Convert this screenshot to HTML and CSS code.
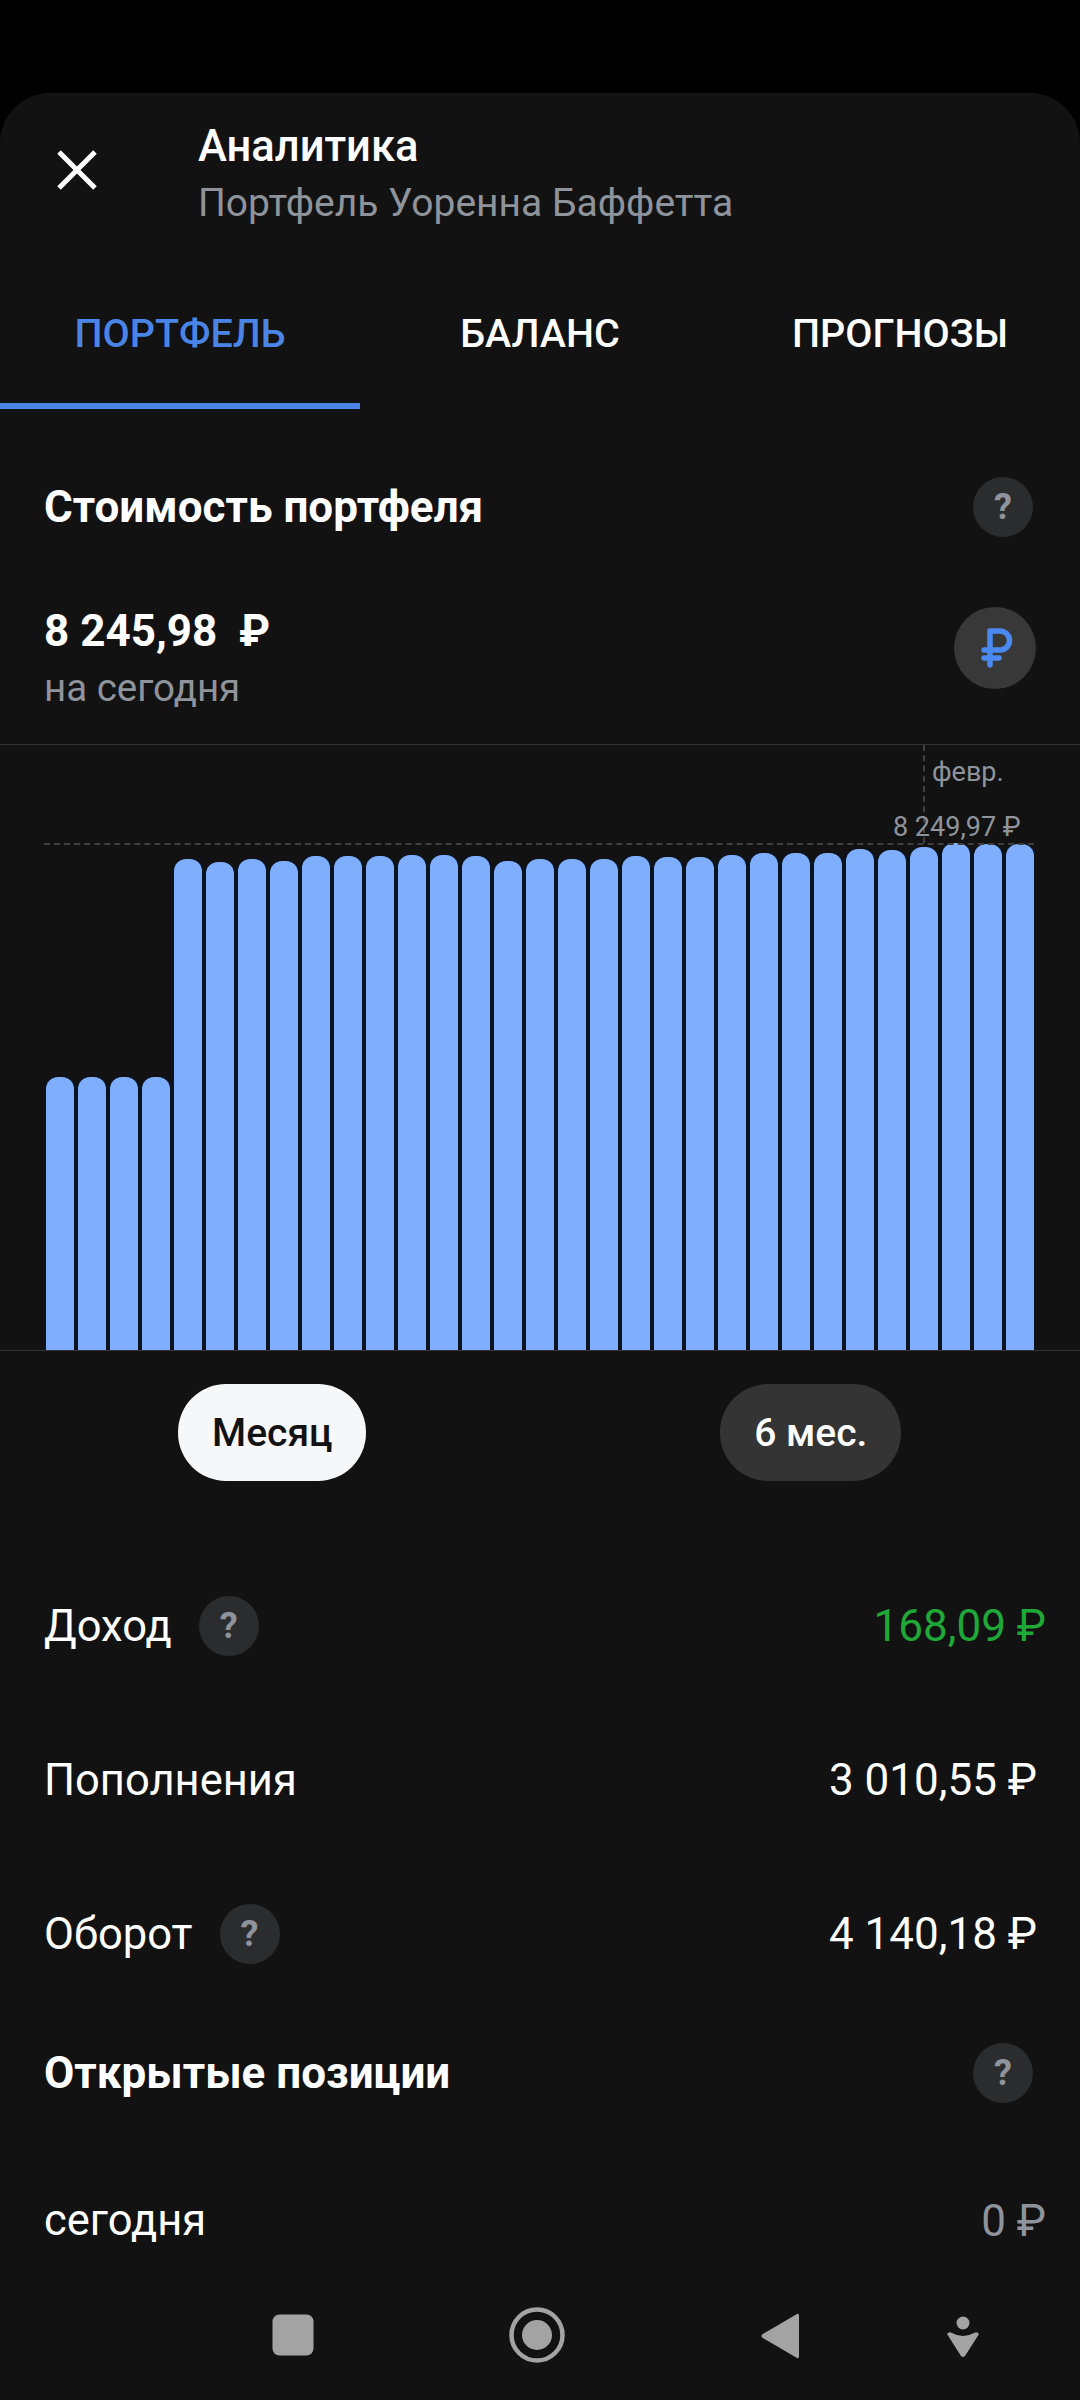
FILE: index.html
```html
<!DOCTYPE html>
<html lang="ru">
<head>
    <meta charset="UTF-8">
    <meta name="viewport" content="width=device-width, initial-scale=1.0">
    <title>Аналитика</title>
    <link rel="stylesheet" href="styles.css">
</head>
<body>

<div class="sheet">
    <header class="top">
        <svg class="close-icon" width="40" height="40" viewBox="0 0 40 40">
            <path d="M2 2 L38 38 M38 2 L2 38" stroke="#fff" stroke-width="5" fill="none"/>
        </svg>
        <div class="top-text">
            <div class="top-title">Аналитика</div>
            <div class="top-sub">Портфель Уоренна Баффетта</div>
        </div>
    </header>

    <nav class="tabs">
        <div class="tab active">ПОРТФЕЛЬ</div>
        <div class="tab">БАЛАНС</div>
        <div class="tab">ПРОГНОЗЫ</div>
    </nav>

    <div class="section-head first">
        <h2>Стоимость портфеля</h2>
        <span class="help">?</span>
    </div>

    <div class="total">
        <div class="total-text">
            <div class="total-sum">8 245,98&nbsp; ₽</div>
            <div class="total-date">на сегодня</div>
        </div>
        <div class="currency">
            <svg width="32" height="40" viewBox="0 0 32 40">
                <path d="M9 37 V3 H19 A9.500 9.500 0 0 1 19 22 H3 M3 30 H18" stroke="#4a8af0" stroke-width="5.500" fill="none" stroke-linecap="round" stroke-linejoin="round"/>
            </svg>
        </div>
    </div>

    <div class="chart">
        <div class="guide-v"></div>
        <div class="guide-h"></div>
        <span class="chart-month">февр.</span>
        <span class="chart-max">8 249,97 ₽</span>
        <div class="bars">
            <div class="bar" style="height: 273px"></div>
            <div class="bar" style="height: 273px"></div>
            <div class="bar" style="height: 273px"></div>
            <div class="bar" style="height: 273px"></div>
            <div class="bar" style="height: 491px"></div>
            <div class="bar" style="height: 488px"></div>
            <div class="bar" style="height: 491px"></div>
            <div class="bar" style="height: 489px"></div>
            <div class="bar" style="height: 494px"></div>
            <div class="bar" style="height: 494px"></div>
            <div class="bar" style="height: 494px"></div>
            <div class="bar" style="height: 495px"></div>
            <div class="bar" style="height: 495px"></div>
            <div class="bar" style="height: 494px"></div>
            <div class="bar" style="height: 489px"></div>
            <div class="bar" style="height: 491px"></div>
            <div class="bar" style="height: 491px"></div>
            <div class="bar" style="height: 491px"></div>
            <div class="bar" style="height: 494px"></div>
            <div class="bar" style="height: 493px"></div>
            <div class="bar" style="height: 493px"></div>
            <div class="bar" style="height: 495px"></div>
            <div class="bar" style="height: 497px"></div>
            <div class="bar" style="height: 497px"></div>
            <div class="bar" style="height: 497px"></div>
            <div class="bar" style="height: 501px"></div>
            <div class="bar" style="height: 500px"></div>
            <div class="bar" style="height: 503px"></div>
            <div class="bar" style="height: 507px"></div>
            <div class="bar" style="height: 506px"></div>
            <div class="bar" style="height: 506px"></div>
        </div>
    </div>

    <div class="periods">
        <button class="pill selected">Месяц</button>
        <button class="pill">6 мес.</button>
    </div>

    <div class="row">
        <div class="row-label">Доход <span class="help">?</span></div>
        <div class="row-value green">168,09 ₽</div>
    </div>
    <div class="row">
        <div class="row-label">Пополнения</div>
        <div class="row-value inset">3 010,55 ₽</div>
    </div>
    <div class="row">
        <div class="row-label">Оборот <span class="help">?</span></div>
        <div class="row-value inset">4 140,18 ₽</div>
    </div>

    <div class="section-head">
        <h2>Открытые позиции</h2>
        <span class="help">?</span>
    </div>

    <div class="row today">
        <div class="row-label">сегодня</div>
        <div class="row-value gray">0 ₽</div>
    </div>

    <div class="navbar">
        <svg class="nav-square" width="42" height="42" viewBox="0 0 42 42">
            <rect x="0.500" y="0.500" width="41" height="41" rx="7" fill="#a3a3a3"/>
        </svg>
        <svg class="nav-home" width="56" height="56" viewBox="0 0 56 56">
            <circle cx="28" cy="28" r="25.500" stroke="#a3a3a3" stroke-width="4.500" fill="none"/>
            <circle cx="28" cy="28" r="15" fill="#a3a3a3"/>
        </svg>
        <svg class="nav-back" width="40" height="48" viewBox="0 0 40 48">
            <path d="M37 2 Q39 1 39 4 V44 Q39 47 37 46 L2 25.500 Q1 24 2 22.500 Z" fill="#a3a3a3"/>
        </svg>
        <svg class="nav-person" width="34" height="42" viewBox="0 0 34 42">
            <circle cx="17" cy="7" r="6.500" fill="#a3a3a3"/>
            <path d="M1 18 Q3 15 6 17 Q17 23 28 17 Q31 15 33 18 L19 40 Q17 42 15 40 Z" fill="#a3a3a3"/>
        </svg>
    </div>
</div>

</body>
</html>
```

FILE: styles.css
```css
* {
    box-sizing: border-box;
}
body {
    margin: 0;
    padding-top: 93px;
    background-color: #000;
    font-family: Roboto, "Noto Sans", sans-serif;
    color: #fff;
}
.sheet {
    height: 2307px;
    background-color: #121212;
    border-radius: 50px 50px 0 0;
    overflow: hidden;
}

/* header */
.top {
    display: flex;
    align-items: flex-start;
    height: 160px;
    padding: 57px 0 0 57px;
}
.close-icon {
    flex: none;
    margin-right: 101px;
}
.top-text {
    margin-top: -30px;
}
.top-title {
    font-size: 43.500px;
    font-weight: 500;
    line-height: 54px;
}
.top-sub {
    font-size: 39px;
    line-height: 52px;
    margin-top: 3px;
    color: #8f939b;
}

/* tabs */
.tabs {
    display: grid;
    grid-template-columns: repeat(3, 1fr);
    height: 156px;
}
.tab {
    display: flex;
    align-items: center;
    justify-content: center;
    height: 156px;
    padding-top: 4px;
    font-size: 39.500px;
    font-weight: 500;
}
.tab.active {
    color: #4a85e6;
    box-shadow: inset 0 -6px 0 #4a85e6;
}

/* section titles */
.section-head {
    display: flex;
    align-items: center;
    justify-content: space-between;
    height: 124px;
    padding: 0 47px 0 44px;
}
.section-head.first {
    height: 100px;
    margin-top: 48px;
}
.section-head h2 {
    margin: 0;
    font-size: 44px;
    font-weight: 700;
}
.help {
    display: inline-flex;
    align-items: center;
    justify-content: center;
    width: 60px;
    height: 60px;
    border-radius: 50%;
    background-color: #2b2c2e;
    color: #8f939b;
    font-size: 36px;
    font-weight: 700;
}

/* total */
.total {
    display: flex;
    align-items: center;
    justify-content: space-between;
    height: 187px;
    padding: 0 44px 0 44px;
}
.total-text {
    margin-top: 14px;
}
.total-sum {
    font-size: 44px;
    font-weight: 700;
    line-height: 56px;
    margin-top: 1px;
}
.total-date {
    font-size: 38.500px;
    line-height: 52px;
    margin-top: 3px;
    color: #8f939b;
}
.currency {
    display: flex;
    align-items: center;
    justify-content: center;
    width: 82px;
    height: 82px;
    margin-top: -5px;
    padding-left: 4px;
    border-radius: 50%;
    background-color: #383838;
}

/* chart */
.chart {
    position: relative;
    height: 607px;
    border-top: 1px solid #343434;
    border-bottom: 1px solid #343434;
}
.bars {
    display: flex;
    align-items: flex-end;
    gap: 4.500px;
    height: 605px;
    padding-left: 46px;
}
.bar {
    flex: none;
    width: 27.500px;
    background-color: #7eaefc;
    border-radius: 12px 12px 0 0;
    box-shadow: 2px 0 0 #0a1420, -2px 0 0 #0a1420;
}
.guide-v {
    position: absolute;
    left: 923px;
    top: 0;
    height: 98px;
    border-left: 2px dashed #3f3f3f;
}
.guide-h {
    position: absolute;
    left: 44px;
    right: 46px;
    top: 98px;
    border-top: 2px dashed #3f3f3f;
}
.chart-month,
.chart-max {
    position: absolute;
    color: #8f939b;
    font-size: 27px;
    line-height: 32px;
}
.chart-month {
    left: 932px;
    top: 11px;
}
.chart-max {
    left: 893px;
    top: 66px;
}

/* period switch */
.periods {
    display: grid;
    grid-template-columns: 1fr 1fr;
    justify-items: center;
    margin: 33px 0 68px;
    padding-left: 3px;
}
.pill {
    height: 97px;
    padding: 0 34px;
    border: none;
    border-radius: 48px;
    background-color: #343434;
    color: #fff;
    font-family: inherit;
    font-size: 39px;
    font-weight: 500;
}
.pill.selected {
    background-color: #f6f7f8;
    color: #121212;
}

/* rows */
.row {
    display: flex;
    align-items: center;
    justify-content: space-between;
    height: 154px;
    padding: 0 34px 0 44px;
}
.row-label {
    display: flex;
    align-items: center;
    gap: 27px;
    font-size: 43.500px;
}
.row-value {
    font-size: 44px;
}
.row-value.inset {
    margin-right: 9px;
}
.green {
    color: #1fa838;
}
.gray {
    color: #8f939b;
}
.row.today {
    height: 137px;
    padding-top: 34px;
}

/* system navigation */
.navbar {
    position: relative;
    height: 128px;
}
.navbar svg {
    position: absolute;
}
.nav-square {
    left: 272px;
    top: 42px;
}
.nav-home {
    left: 509px;
    top: 35px;
}
.nav-back {
    left: 760px;
    top: 40px;
}
.nav-person {
    left: 946px;
    top: 44px;
}
```
